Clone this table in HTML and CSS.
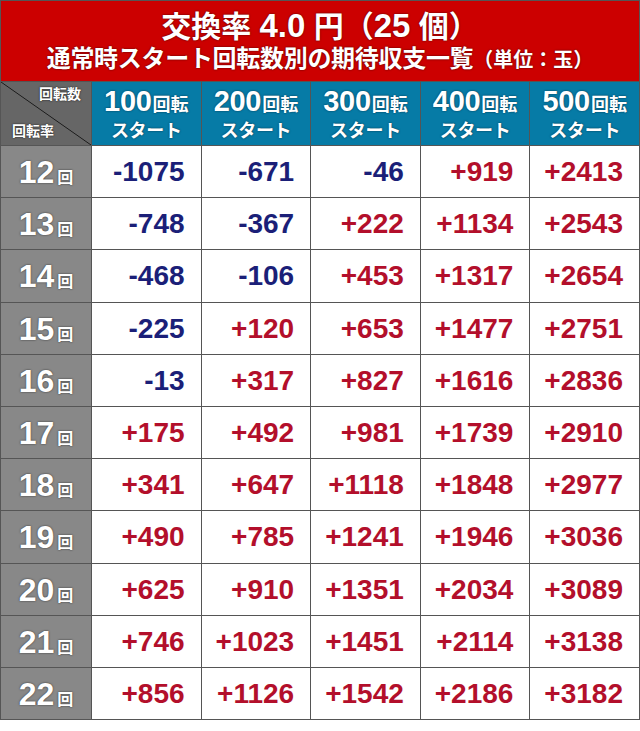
FILE: index.html
```html
<!DOCTYPE html>
<html lang="ja">
<head>
<meta charset="utf-8">
<link rel="stylesheet" href="styles.css">
</head>
<body>
<div class="sheet">
  <div class="title">
    <div class="t1">交換率 <span class="tnum">4.0</span> 円（<span class="tnum">25</span> 個）</div>
    <div class="t2">通常時スタート回転数別の期待収支一覧<span class="unit">（単位：玉）</span></div>
  </div>

  <div class="corner"><span class="c-top">回転数</span><span class="c-bot">回転率</span></div>
  <div class="colhead"><div class="l1"><span class="big">100</span><span class="sm">回転</span></div><div class="l2">スタート</div></div>
  <div class="colhead"><div class="l1"><span class="big">200</span><span class="sm">回転</span></div><div class="l2">スタート</div></div>
  <div class="colhead"><div class="l1"><span class="big">300</span><span class="sm">回転</span></div><div class="l2">スタート</div></div>
  <div class="colhead"><div class="l1"><span class="big">400</span><span class="sm">回転</span></div><div class="l2">スタート</div></div>
  <div class="colhead"><div class="l1"><span class="big">500</span><span class="sm">回転</span></div><div class="l2">スタート</div></div>

  <div class="rowhead"><span class="rn">12</span><span class="rk">回</span></div>
  <div class="cell neg">-1075</div><div class="cell neg">-671</div><div class="cell neg">-46</div><div class="cell pos">+919</div><div class="cell pos">+2413</div>

  <div class="rowhead"><span class="rn">13</span><span class="rk">回</span></div>
  <div class="cell neg">-748</div><div class="cell neg">-367</div><div class="cell pos">+222</div><div class="cell pos">+1134</div><div class="cell pos">+2543</div>

  <div class="rowhead"><span class="rn">14</span><span class="rk">回</span></div>
  <div class="cell neg">-468</div><div class="cell neg">-106</div><div class="cell pos">+453</div><div class="cell pos">+1317</div><div class="cell pos">+2654</div>

  <div class="rowhead"><span class="rn">15</span><span class="rk">回</span></div>
  <div class="cell neg">-225</div><div class="cell pos">+120</div><div class="cell pos">+653</div><div class="cell pos">+1477</div><div class="cell pos">+2751</div>

  <div class="rowhead"><span class="rn">16</span><span class="rk">回</span></div>
  <div class="cell neg">-13</div><div class="cell pos">+317</div><div class="cell pos">+827</div><div class="cell pos">+1616</div><div class="cell pos">+2836</div>

  <div class="rowhead"><span class="rn">17</span><span class="rk">回</span></div>
  <div class="cell pos">+175</div><div class="cell pos">+492</div><div class="cell pos">+981</div><div class="cell pos">+1739</div><div class="cell pos">+2910</div>

  <div class="rowhead"><span class="rn">18</span><span class="rk">回</span></div>
  <div class="cell pos">+341</div><div class="cell pos">+647</div><div class="cell pos">+1118</div><div class="cell pos">+1848</div><div class="cell pos">+2977</div>

  <div class="rowhead"><span class="rn">19</span><span class="rk">回</span></div>
  <div class="cell pos">+490</div><div class="cell pos">+785</div><div class="cell pos">+1241</div><div class="cell pos">+1946</div><div class="cell pos">+3036</div>

  <div class="rowhead"><span class="rn">20</span><span class="rk">回</span></div>
  <div class="cell pos">+625</div><div class="cell pos">+910</div><div class="cell pos">+1351</div><div class="cell pos">+2034</div><div class="cell pos">+3089</div>

  <div class="rowhead"><span class="rn">21</span><span class="rk">回</span></div>
  <div class="cell pos">+746</div><div class="cell pos">+1023</div><div class="cell pos">+1451</div><div class="cell pos">+2114</div><div class="cell pos">+3138</div>

  <div class="rowhead"><span class="rn">22</span><span class="rk">回</span></div>
  <div class="cell pos">+856</div><div class="cell pos">+1126</div><div class="cell pos">+1542</div><div class="cell pos">+2186</div><div class="cell pos">+3182</div>
</div>
</body>
</html>
```

FILE: styles.css
```css
html, body {
  margin: 0;
  padding: 0;
  background: #ffffff;
}

body {
  font-family: "Liberation Sans", "Noto Sans CJK JP", sans-serif;
  font-weight: bold;
}

.sheet {
  width: 638px;
  padding: 1px;
  background: #555555;
  display: grid;
  grid-template-columns: 90px repeat(5, 1fr);
  grid-template-rows: 80px 63px repeat(11, 51.2px);
  gap: 1px;
}

.title {
  grid-column: 1 / -1;
  background: #cc0000;
  color: #ffffff;
  display: flex;
  flex-direction: column;
  align-items: center;
  justify-content: flex-start;
  text-shadow: 0 0 2px rgba(50, 0, 0, 0.9);
  padding-top: 8px;
}

.t1 {
  font-size: 30px;
  line-height: 34px;
  white-space: nowrap;
}

.tnum {
  font-size: 33px;
}

.t2 {
  font-size: 24px;
  line-height: 30px;
  letter-spacing: -0.3px;
  white-space: nowrap;
}

.unit {
  font-size: 20px;
  letter-spacing: 0;
}

.corner {
  background-color: #666666;
  background-image: linear-gradient(to top right, transparent calc(50% - 0.8px), #1a1a1a 50%, transparent calc(50% + 0.8px));
  display: flex;
  flex-direction: column;
  justify-content: space-between;
  padding: 4px 10px 6px 11px;
  color: #ffffff;
  font-size: 14px;
  line-height: 16px;
  text-shadow: 0 0 2px rgba(0, 0, 0, 0.8);
}

.c-top {
  align-self: flex-end;
}

.c-bot {
  align-self: flex-start;
}

.colhead {
  background: #067ba6;
  color: #ffffff;
  display: flex;
  flex-direction: column;
  align-items: center;
  justify-content: center;
  text-shadow: 0 0 2px rgba(0, 30, 50, 0.8);
  padding-top: 1px;
}

.l1 {
  line-height: 28px;
  white-space: nowrap;
}

.big {
  font-size: 29px;
  letter-spacing: -0.3px;
}

.sm {
  font-size: 18px;
  margin-left: 1px;
}

.l2 {
  font-size: 18px;
  line-height: 22px;
  letter-spacing: -0.3px;
}

.rowhead {
  background: #888888;
  color: #ffffff;
  display: flex;
  align-items: baseline;
  justify-content: center;
  padding-top: 9px;
  text-shadow: 0 0 2px rgba(0, 0, 0, 0.7);
}

.rn {
  font-size: 32px;
  line-height: 34px;
}

.rk {
  font-size: 16px;
  margin-left: 3px;
}

.cell {
  background: #ffffff;
  display: flex;
  align-items: center;
  justify-content: flex-end;
  padding-right: 16px;
  font-size: 28px;
  padding-top: 1px;
}

.neg {
  color: #1b1f78;
}

.pos {
  color: #b30f2b;
}
```
